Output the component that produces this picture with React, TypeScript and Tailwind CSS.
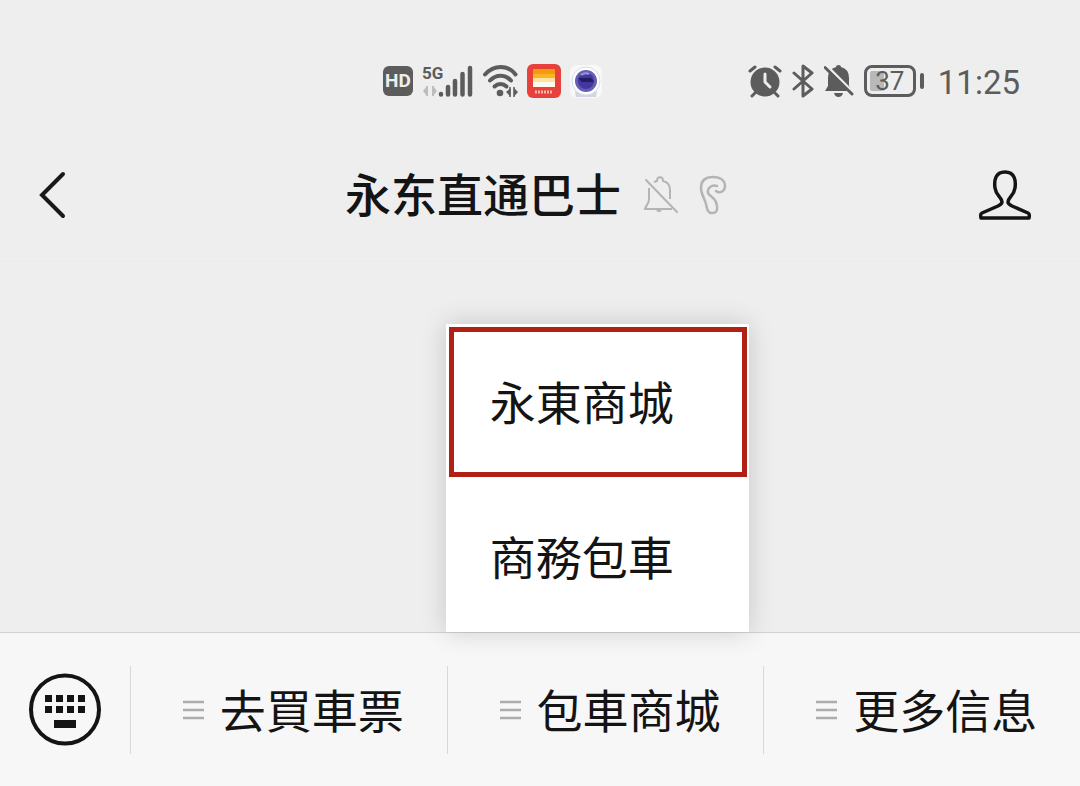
import type { ReactNode } from "react";

const MENUS = ["去買車票", "包車商城", "更多信息"];
const SUBMENU = ["永東商城", "商務包車"];

function SignalIcon() {
  return (
    <div className="relative h-9 w-[51px]">
      <span className="absolute left-0 top-0 font-['Roboto'] text-[17px] leading-5 font-bold text-[#5c5c5c]">5G</span>
      <svg className="h-9 w-[51px]" viewBox="0 0 51 36" fill="none">
        <path d="M1 28l4-5v10zM15 28l-4-5v10z" fill="#bdbdbd" />
        <path d="M5 23v10M11 23v10" stroke="#bdbdbd" strokeWidth="2" />
        <g stroke="#5c5c5c" strokeWidth="4.500" strokeLinecap="round">
          <path d="M19 31v.5M26 24v7.500M33 18v13.500M40.500 11v20.500M48 5v26.500" />
        </g>
      </svg>
    </div>
  );
}

function WifiIcon() {
  return (
    <svg className="h-9 w-9" viewBox="0 0 36 36" fill="none">
      <g stroke="#5c5c5c" strokeWidth="4" strokeLinecap="round">
        <path d="M3 11.500C12 1.500 26 1.500 33.500 11.500" />
        <path d="M8 17.500C14 11 23 11 29 17.500" />
        <path d="M12.500 23.500C16 20 21 20 24.500 23.500" />
      </g>
      <circle cx="18" cy="30" r="3.300" fill="#5c5c5c" />
      <path d="M24 29l4.500-4v8.500zM36 29l-4-4v8.500z" fill="#5c5c5c" />
      <path d="M28 24v10M32 24v10" stroke="#5c5c5c" strokeWidth="1.500" />
    </svg>
  );
}

function TicketAppIcon() {
  return (
    <svg className="h-[34px] w-[34px]" viewBox="0 0 34 34">
      <rect width="34" height="34" rx="6" fill="#e8403a" />
      <rect x="6" y="5" width="22" height="9" fill="#f59a0c" />
      <rect x="6" y="10" width="22" height="4" fill="#fbb424" />
      <rect x="6" y="14" width="22" height="4" fill="#fde2a0" />
      <rect x="6" y="18" width="22" height="5" fill="#fffaf0" />
      <path d="M8 28h18" stroke="#f7b5ae" strokeWidth="3" strokeDasharray="2 1" />
    </svg>
  );
}

function CameraAppIcon() {
  return (
    <svg className="h-[34px] w-8" viewBox="1 0 32 34">
      <rect x="1" y="1" width="32" height="33" rx="7" fill="#f8f8f8" />
      <path d="M6 27l1 6h20l1-6z" fill="#d5d5df" />
      <circle cx="17" cy="17" r="14" fill="#fff" stroke="#dcdce6" />
      <circle cx="17" cy="17" r="11" fill="#655fb4" />
      <circle cx="17" cy="17" r="8" fill="#4336a0" />
      <path d="M9 14h13l3 4H13z" fill="#241c60" />
      <path d="M12 11q4-3 8-1" stroke="#9b96dc" strokeWidth="2" fill="none" />
    </svg>
  );
}

function AlarmIcon() {
  return (
    <svg className="h-9 w-[34px]" viewBox="0 0 34 36" fill="none" strokeLinecap="round">
      <circle cx="17" cy="19" r="14.500" fill="#5c5c5c" />
      <path d="M2 8l5-4M32 8l-5-4M7 30l-3 3M27 30l3 3" stroke="#5c5c5c" strokeWidth="3" />
      <path d="M17 11v8l5 5" stroke="#eeeeee" strokeWidth="3" strokeLinejoin="round" />
    </svg>
  );
}

function BluetoothIcon() {
  return (
    <svg className="h-9 w-[22px]" viewBox="0 0 22 36" fill="none">
      <path
        d="M2 10l18 16-9 7V3l9 7L2 26"
        stroke="#5c5c5c"
        strokeWidth="3"
        strokeLinecap="round"
        strokeLinejoin="round"
      />
    </svg>
  );
}

function MutedIcon() {
  return (
    <svg className="h-9 w-[30px]" viewBox="0 0 30 36" fill="none">
      <path
        d="M12 4q0-2 2.500-2T17 4q8 2 8 11v8l3 5H1l3-5v-8Q4 6 12 4zM10 30h9q-1 4-4.500 4T10 30z"
        fill="#5c5c5c"
      />
      <path d="M2.500 2.500L31 31" stroke="#eeeeee" strokeWidth="2.500" />
      <path d="M1 4.500L28 31" stroke="#5c5c5c" strokeWidth="3" strokeLinecap="round" />
    </svg>
  );
}

function Battery() {
  return (
    <div className="flex items-center gap-1">
      <div className="flex h-8 w-[52px] rounded-lg border-[3px] border-[#5c5c5c] p-[3px]">
        <div className="flex w-full items-center justify-center rounded-xs bg-linear-to-r from-[#b8b8b8] from-35% to-transparent to-35%">
          <span className="font-['Roboto'] text-[26px] leading-5 text-[#5c5c5c]">37</span>
        </div>
      </div>
      <div className="h-4 w-1 rounded-sm bg-[#5c5c5c]" />
    </div>
  );
}

function StatusBar() {
  return (
    <div className="flex h-32 items-center justify-between pt-[34px] pr-[60px] pl-[383px]">
      <div className="flex items-center gap-[9px]">
        <span className="flex h-[30px] w-[30px] items-center justify-center rounded-md bg-[#5c5c5c] font-['Roboto'] text-[19px] font-bold text-[#eeeeee]">
          HD
        </span>
        <SignalIcon />
        <WifiIcon />
        <TicketAppIcon />
        <CameraAppIcon />
      </div>
      <div className="flex items-center gap-[10px]">
        <AlarmIcon />
        <BluetoothIcon />
        <MutedIcon />
        <Battery />
        <span className="pt-1 pl-1 font-['Roboto'] text-[33px] leading-9 text-[#5c5c5c]">11:25</span>
      </div>
    </div>
  );
}

function IconButton({ label, className, children }: { label: string; className?: string; children: ReactNode }) {
  return (
    <button type="button" aria-label={label} className={className}>
      {children}
    </button>
  );
}

function NavBar() {
  return (
    <header className="grid h-[134px] grid-cols-[1fr_auto_1fr] items-center border-b border-[#ebebeb] pr-12 pl-9">
      <IconButton label="返回" className="justify-self-start">
        <svg className="h-[50px] w-8" viewBox="0 0 32 50" fill="none">
          <path d="M27 4L6 25l21 21" stroke="#191919" strokeWidth="4" strokeLinecap="round" />
        </svg>
      </IconButton>
      <div className="flex items-center pl-1">
        <h1 className="pb-[6px] text-[46px] leading-[54px] font-medium text-[#141414]">永东直通巴士</h1>
        {/* muted + earpiece mode */}
        <svg className="ml-[22px] h-10 w-9" viewBox="0 0 36 40" fill="none" stroke="#b4b4b4" strokeWidth="2">
          <path d="M6 13v11c0 5-3 6-4 10h27M11 7l3-1c0-5 6-5 6 0 5 1 7 5 7 9v9M14 35q2 2 4 0" />
          <path d="M3 5l31 32" strokeLinecap="round" />
        </svg>
        <svg className="ml-5 h-10 w-7" viewBox="0 0 28 40" fill="none" stroke="#b4b4b4" strokeWidth="2.500">
          <path
            d="M18 11C13 9 8 13 9 18C10 21 15 22 17 27C19 33 19 38 13 38C8 38 8 33 7 29C6 24 2 20 2 13C2 5 7 2 14 2C22 2 26 6 26 11C26 16 21 19 17 16"
            strokeLinecap="round"
            strokeLinejoin="round"
          />
        </svg>
      </div>
      <IconButton label="帐号" className="justify-self-end">
        <svg className="h-[52px] w-[54px]" viewBox="0 0 54 52" fill="none">
          <path
            d="M27 3C17 3 16 12 17 19c1 8 7 9 7 14 0 2-2 3-4 4L4 44q-2 1-1 5h48q1-4-1-5l-16-7c-2-1-4-2-4-4 0-5 6-6 7-14C38 12 37 3 27 3z"
            stroke="#141414"
            strokeWidth="3.500"
            strokeLinejoin="round"
          />
        </svg>
      </IconButton>
    </header>
  );
}

function Submenu() {
  return (
    <div className="absolute bottom-full -left-px mb-px flex w-[303px] flex-col bg-white pt-[3px] pr-[2px] pl-[3px] text-[46px] leading-[54px] shadow-[0_0_24px_rgba(0,0,0,0.17)]">
      <button type="button" className="h-[150px] border-[5px] border-[#b02014] pb-1 pl-9 text-left">
        {SUBMENU[0]}
      </button>
      <button type="button" className="h-[155px] pl-[41px] text-left">
        {SUBMENU[1]}
      </button>
    </div>
  );
}

function MenuBar() {
  return (
    <footer className="flex h-[154px] items-center border-t border-[#d2d2d2] bg-[#f7f7f7]">
      <IconButton label="键盘" className="flex w-[130px] justify-center">
        <svg className="h-[74px] w-[74px]" viewBox="0 0 74 74" fill="#141414">
          <circle cx="37" cy="36.500" r="34" fill="none" stroke="#141414" strokeWidth="4" />
          <path d="M17 22h7v7h-7zM28 22h7v7h-7zM39 22h7v7h-7zM50 22h7v7h-7zM17 33h7v7h-7zM28 33h7v7h-7zM39 33h7v7h-7zM50 33h7v7h-7zM26 47h22v8H26z" />
        </svg>
      </IconButton>
      {MENUS.map((label, i) => (
        <div key={label} className="relative flex h-full flex-1 items-center">
          <div className="h-[88px] w-px bg-[#d8d8d8]" />
          <button type="button" className="flex flex-1 items-center justify-center gap-4 pl-[9px]">
            <svg className="h-5 w-[21px]" viewBox="0 0 21 20" stroke="#acacac" strokeWidth="2.500">
              <path d="M0 2h21M0 10h21M0 18h21" />
            </svg>
            <span className="pb-1 text-[46px] leading-[54px]">{label}</span>
          </button>
          {i === 1 && <Submenu />}
        </div>
      ))}
    </footer>
  );
}

export default function App() {
  return (
    <div className="flex min-h-screen flex-col bg-[#eeeeee] font-['Noto_Sans_CJK_SC',sans-serif] text-[#141414]">
      <StatusBar />
      <NavBar />
      <main className="flex-1" />
      <MenuBar />
    </div>
  );
}
